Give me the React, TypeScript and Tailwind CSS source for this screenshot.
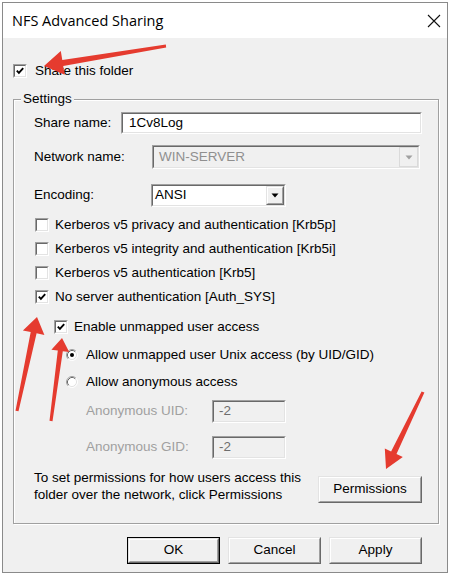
import React from "react";

type Pt = [number, number];

// red annotation arrow: tapered shaft + head, page coordinates
function arrowPoints(tail: Pt, tip: Pt, headLen: number, headHalf: number, w0: number, w1: number) {
  const dx = tip[0] - tail[0];
  const dy = tip[1] - tail[1];
  const len = Math.hypot(dx, dy);
  const ux = dx / len;
  const uy = dy / len;
  const px = -uy;
  const py = ux;
  const bx = tip[0] - ux * headLen;
  const by = tip[1] - uy * headLen;
  const pts: Pt[] = [
    [tail[0] + (px * w0) / 2, tail[1] + (py * w0) / 2],
    [bx + (px * w1) / 2, by + (py * w1) / 2],
    [bx + px * headHalf, by + py * headHalf],
    tip,
    [bx - px * headHalf, by - py * headHalf],
    [bx - (px * w1) / 2, by - (py * w1) / 2],
    [tail[0] - (px * w0) / 2, tail[1] - (py * w0) / 2],
  ];
  return pts.map((p) => `${p[0].toFixed(1)},${p[1].toFixed(1)}`).join(" ");
}

const Sunken = ({ className = "", inner = "", children }: { className?: string; inner?: string; children?: React.ReactNode }) => (
  <div className={`border border-t-[#a0a0a0] border-l-[#a0a0a0] border-r-white border-b-white ${className}`}>
    <div className={`h-full w-full border border-t-[#696969] border-l-[#696969] border-r-[#e3e3e3] border-b-[#e3e3e3] ${inner}`}>
      {children}
    </div>
  </div>
);

const Raised = ({ className = "", inner = "", children }: { className?: string; inner?: string; children?: React.ReactNode }) => (
  <div className={`border border-t-[#e3e3e3] border-l-[#e3e3e3] border-r-[#696969] border-b-[#696969] ${className}`}>
    <div className={`h-full w-full border border-t-white border-l-white border-r-[#a0a0a0] border-b-[#a0a0a0] bg-[#f0f0f0] ${inner}`}>
      {children}
    </div>
  </div>
);

const CheckBox = ({ checked }: { checked?: boolean }) => (
  <Sunken className="w-[14px] h-[14px] shrink-0" inner="bg-white flex items-center justify-center">
    {checked && (
      <svg width="8" height="8" viewBox="0 0 8 8">
        <polyline points="0.8,3.6 2.9,5.8 7.2,1.2" fill="none" stroke="#000" strokeWidth="1.9" />
      </svg>
    )}
  </Sunken>
);

const Radio = ({ checked }: { checked?: boolean }) => (
  <svg width="12" height="12" viewBox="0 0 12 12" className="shrink-0">
    <circle cx="6" cy="6" r="5" fill="#fff" />
    <path d="M2.11 9.89 A5.5 5.5 0 0 1 9.89 2.11" fill="none" stroke="#a0a0a0" />
    <path d="M9.89 2.11 A5.5 5.5 0 0 1 2.11 9.89" fill="none" stroke="#fff" />
    <path d="M2.82 9.18 A4.5 4.5 0 0 1 9.18 2.82" fill="none" stroke="#696969" />
    <path d="M9.18 2.82 A4.5 4.5 0 0 1 2.82 9.18" fill="none" stroke="#e3e3e3" />
    {checked && <circle cx="6" cy="6" r="2" fill="#000" />}
  </svg>
);

const DropArrow = ({ disabled }: { disabled?: boolean }) => (
  <svg width="8" height="5" viewBox="0 0 8 5">
    <polygon points="0.5,0.5 7.5,0.5 4,4.5" fill={disabled ? "#a0a0a0" : "#000"} />
  </svg>
);

const CheckRow = ({ checked, label, className = "" }: { checked?: boolean; label: string; className?: string }) => (
  <div className={`flex items-center h-[14px] gap-[6px] ${className}`}>
    <CheckBox checked={checked} />
    <span className="leading-[14px] whitespace-nowrap">{label}</span>
  </div>
);

const Button = ({ label, isDefault, className = "" }: { label: string; isDefault?: boolean; className?: string }) =>
  isDefault ? (
    <div className={`border border-black ${className}`}>
      <Raised className="h-full" inner="flex items-center justify-center">
        {label}
      </Raised>
    </div>
  ) : (
    <Raised className={className} inner="flex items-center justify-center">
      {label}
    </Raised>
  );

export default function App() {
  const arrows = [
    arrowPoints([166, 46], [44, 66], 19, 12, 3, 6),
    arrowPoints([17, 411], [37, 317], 16, 11, 3, 6),
    arrowPoints([51, 421], [62, 338], 13, 9, 3, 5),
    arrowPoints([423, 392], [386, 469], 18, 10, 3, 6),
  ];

  return (
    <div
      className="relative w-[453px] h-[575px] bg-white text-[13.5px] text-black overflow-hidden"
      style={{ fontFamily: '"Liberation Sans", Arial, sans-serif' }}
    >
      <div className="ml-[2px] mt-[2px] w-[446px] h-[571px] border border-[#8a8a8a] flex flex-col">
        {/* title bar */}
        <div className="h-[35px] bg-white flex items-center justify-between pl-[9px] pr-[6px] shrink-0">
          <span className="text-[14.5px] text-black" style={{ fontFamily: '"Open Sans", "Noto Sans", sans-serif' }}>
            NFS Advanced Sharing
          </span>
          <svg width="14" height="14" viewBox="0 0 14 14">
            <path d="M1 1 L13 13 M13 1 L1 13" stroke="#111" strokeWidth="1.1" />
          </svg>
        </div>

        {/* body */}
        <div className="flex-1 bg-[#f0f0f0] px-[10px] flex flex-col">
          <div className="mt-[26px] flex items-center h-[14px] gap-[8px]">
            <CheckBox checked />
            <span className="leading-[14px]">Share this folder</span>
          </div>

          <fieldset className="mt-[13px] w-[426px] min-w-0 border border-[#a0a0a0] shadow-[inset_1px_1px_0_#fff,1px_1px_0_#fff] pl-[20px] pr-[16px] pb-[20px]">
            <legend className="-ml-[13px] px-[2px] leading-[16px] bg-[#f0f0f0]">Settings</legend>

            <div className="mt-[5px] flex items-center h-[22px]">
              <span className="w-[87px] shrink-0">Share name:</span>
              <Sunken className="w-[302px] h-[22px]" inner="bg-white flex items-center pl-[6px]">
                1Cv8Log
              </Sunken>
            </div>

            <div className="mt-[11px] flex items-center h-[24px]">
              <span className="w-[118px] shrink-0">Network name:</span>
              <Sunken className="w-[268px] h-[24px]" inner="bg-[#f0f0f0] flex items-center">
                <span className="flex-1 pl-[5px] text-[#8f8f8f]">WIN-SERVER</span>
                <div className="w-[19px] h-full border border-[#dadada] flex items-center justify-center">
                  <DropArrow disabled />
                </div>
              </Sunken>
            </div>

            <div className="mt-[15px] flex items-center h-[23px]">
              <span className="w-[117px] shrink-0">Encoding:</span>
              <Sunken className="w-[135px] h-[23px]" inner="bg-white flex items-center">
                <span className="flex-1 pl-[2px]">ANSI</span>
                <Raised className="w-[18px] h-full" inner="flex items-center justify-center">
                  <DropArrow />
                </Raised>
              </Sunken>
            </div>

            <CheckRow className="mt-[11px] ml-[1px]" label="Kerberos v5 privacy and authentication [Krb5p]" />
            <CheckRow className="mt-[10px] ml-[1px]" label="Kerberos v5 integrity and authentication [Krb5i]" />
            <CheckRow className="mt-[10px] ml-[1px]" label="Kerberos v5 authentication [Krb5]" />
            <CheckRow className="mt-[10px] ml-[1px]" checked label="No server authentication [Auth_SYS]" />
            <CheckRow className="mt-[16px] ml-[20px]" checked label="Enable unmapped user access" />

            <div className="mt-[15px] ml-[32px] flex items-center h-[12px] gap-[8px]">
              <Radio checked />
              <span className="leading-[12px] whitespace-nowrap">Allow unmapped user Unix access (by UID/GID)</span>
            </div>
            <div className="mt-[15px] ml-[32px] flex items-center h-[12px] gap-[8px]">
              <Radio />
              <span className="leading-[12px]">Allow anonymous access</span>
            </div>

            <div className="mt-[12px] ml-[52px] flex items-center h-[23px]">
              <span className="w-[126px] shrink-0 text-[#a0a0a0]">Anonymous UID:</span>
              <Sunken className="w-[74px] h-[23px]" inner="bg-[#f0f0f0] flex items-center pl-[5px] text-[#6d6d6d]">
                -2
              </Sunken>
            </div>
            <div className="mt-[13px] ml-[52px] flex items-center h-[23px]">
              <span className="w-[126px] shrink-0 text-[#a0a0a0]">Anonymous GID:</span>
              <Sunken className="w-[74px] h-[23px]" inner="bg-[#f0f0f0] flex items-center pl-[5px] text-[#6d6d6d]">
                -2
              </Sunken>
            </div>

            <div className="mt-[10px] flex justify-between items-start">
              <p className="leading-[17px] w-[280px] whitespace-nowrap">
                To set permissions for how users access this
                <br />
                folder over the network, click Permissions
              </p>
              <Button label="Permissions" className="mt-[7px] w-[104px] h-[27px] shrink-0" />
            </div>
          </fieldset>

          <div className="mt-[13px] flex justify-end gap-[8px] pr-[15px]">
            <Button label="OK" isDefault className="w-[93px] h-[27px]" />
            <Button label="Cancel" className="w-[93px] h-[27px]" />
            <Button label="Apply" className="w-[93px] h-[27px]" />
          </div>
        </div>
      </div>

      {/* annotation arrows */}
      <svg className="absolute left-0 top-0 pointer-events-none" width="453" height="575" viewBox="0 0 453 575">
        {arrows.map((pts, i) => (
          <polygon key={i} points={pts} fill="#e53b2f" />
        ))}
      </svg>
    </div>
  );
}
